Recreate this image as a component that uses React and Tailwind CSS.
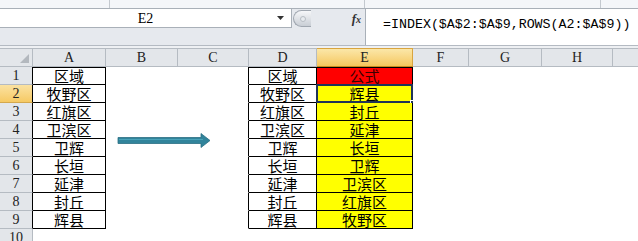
import React from 'react';

const cols = ['A', 'B', 'C', 'D', 'E', 'F', 'G', 'H', 'I'];
const bordered = ['A', 'D', 'E'];

const colA = ['区域', '牧野区', '红旗区', '卫滨区', '卫辉', '长垣', '延津', '封丘', '辉县'];
const colE = ['公式', '辉县', '封丘', '延津', '长垣', '卫辉', '卫滨区', '红旗区', '牧野区'];

const cellText = (col, row) => {
  if (row > 9) return '';
  if (col === 'A' || col === 'D') return colA[row - 1];
  if (col === 'E') return colE[row - 1];
  return '';
};

const isBordered = (col, row) => row <= 9 && bordered.includes(col);

const Cell = ({ col, row }) => {
  const idx = cols.indexOf(col);
  const next = cols[idx + 1];
  const own = isBordered(col, row);
  const rightBlack = own || (next && isBordered(next, row));
  const fill =
    col === 'E' && row === 1 ? 'bg-[#ff0000]' : col === 'E' && row <= 9 ? 'bg-[#ffff00]' : 'bg-white';
  return (
    <div
      className={`relative flex items-end justify-center h-[18px] border-r border-b ${
        rightBlack ? 'border-r-black' : 'border-r-transparent'
      } ${own ? 'border-b-black' : 'border-b-transparent'} ${fill} ${
        own && row === 1 ? 'shadow-[inset_0_1px_0_#000]' : ''
      }`}
    >
      <span
        className={`text-[15px] leading-[16px] ${col === 'E' && row === 1 ? 'text-[#3a0000]' : 'text-black'}`}
        style={{ fontFamily: '"Noto Sans CJK SC", sans-serif' }}
      >
        {cellText(col, row)}
      </span>
      {col === 'E' && row === 2 && (
        <>
          <div className="absolute -left-px -top-px -right-px -bottom-px border-2 border-[#1f3458]" />
          <div className="absolute -right-[4px] -bottom-[4px] w-[6px] h-[6px] bg-[#1f3458] border border-white" />
        </>
      )}
    </div>
  );
};

export default function App() {
  const rows = [1, 2, 3, 4, 5, 6, 7, 8, 9, 10];
  const mono = { fontFamily: '"Liberation Mono", monospace' };
  const serif = { fontFamily: '"Liberation Serif", serif' };

  return (
    <div className="relative w-[638px] h-[241px] overflow-hidden bg-white">
      {/* ribbon edge */}
      <div className="flex h-[9px] bg-[#f4f6f9] border-b border-[#a9b0b8]">
        <div className="w-[110px] border-r border-[#c4c9cf]" />
        <div className="w-[255px] border-r border-[#c4c9cf]" />
        <div className="w-[236px] border-r border-[#c4c9cf]" />
        <div className="flex-1" />
      </div>

      {/* formula bar */}
      <div className="flex h-[37px] bg-[#e6e9ee] border-b border-[#b4bac2]">
        <div className="w-[365px] flex flex-col">
          <div className="flex items-center h-[19px]">
            <div className="relative flex items-center justify-center w-[292px] h-[19px] bg-white border-r border-b border-[#a9b0b8]">
              <span className="text-[14px] text-black" style={serif}>E2</span>
              <svg className="absolute right-[7px] top-[7px]" width="7" height="4" viewBox="0 0 7 4">
                <path d="M0 0h7L3.5 4z" fill="#333" />
              </svg>
            </div>
            <div className="w-[18px] h-[17px] ml-[1px] rounded-l-full bg-gradient-to-b from-[#f6f7f9] to-[#c9ced5] border border-[#a0a7b0] border-r-0 flex items-center justify-center">
              <div className="w-[6px] h-[6px] rounded-full bg-[#e8ebef] border border-[#b7bdc4]" />
            </div>
            <div className="flex-1 flex justify-end pr-[4px]">
              <span className="text-[13px] italic font-bold text-[#333]" style={serif}>
                f<span className="text-[10px]">x</span>
              </span>
            </div>
          </div>
          <div className="flex-1" />
        </div>
        <div className="flex-1 bg-white border-l border-[#a9b0b8] pl-[17px] pt-[1px]">
          <span className="text-[13.3px] leading-[19px] text-black whitespace-nowrap" style={mono}>
            =INDEX($A$2:$A$9,ROWS(A2:$A$9))
          </span>
        </div>
      </div>
      <div className="h-[2px] bg-[#eef0f3]" />

      {/* sheet */}
      <div className="grid grid-cols-[33px_73px_72px_71px_68px_96px_56px_73px_71px_60px]">
        <div className="relative h-[19px] bg-[#e3e6ea] border-t border-r border-b border-[#b5bbc2]">
          <svg className="absolute right-[3px] bottom-[3px]" width="9" height="9" viewBox="0 0 9 9">
            <path d="M9 0V9H0z" fill="#b3b8be" />
          </svg>
        </div>
        {cols.map((c) => (
          <div
            key={c}
            className={`flex items-center justify-center h-[19px] border-t border-r border-b text-[14px] text-[#222] ${
              c === 'E'
                ? 'bg-gradient-to-b from-[#fbe7a8] to-[#f5c75c] border-[#d9a53f] border-b-[#c98a1e]'
                : 'bg-[#e3e6ea] border-[#b5bbc2]'
            }`}
            style={serif}
          >
            {c}
          </div>
        ))}
        {rows.map((r) => (
          <React.Fragment key={r}>
            <div
              className={`flex items-center justify-center h-[18px] border-r border-b text-[14px] text-[#222] ${
                r === 2 ? 'bg-gradient-to-b from-[#fbe2a0] to-[#f6c963] border-b-[#d4a84d]' : 'bg-[#e3e6ea] border-b-[#b5bbc2]'
              } ${r <= 9 ? 'border-r-black' : 'border-r-[#b5bbc2]'}`}
              style={serif}
            >
              {r}
            </div>
            {cols.map((c) => (
              <Cell key={c} col={c} row={r} />
            ))}
          </React.Fragment>
        ))}
      </div>

      {/* arrow shape */}
      <svg className="absolute left-[117px] top-[132px]" width="95" height="17" viewBox="0 0 95 17">
        <path d="M1 5.5H84V1.5L93 8.5L84 15.5V11.5H1z" fill="#31849b" stroke="#2a6f83" strokeWidth="0.8" />
        <path d="M2 7.5H86" stroke="#4aa3b9" strokeWidth="1" />
      </svg>
    </div>
  );
}
